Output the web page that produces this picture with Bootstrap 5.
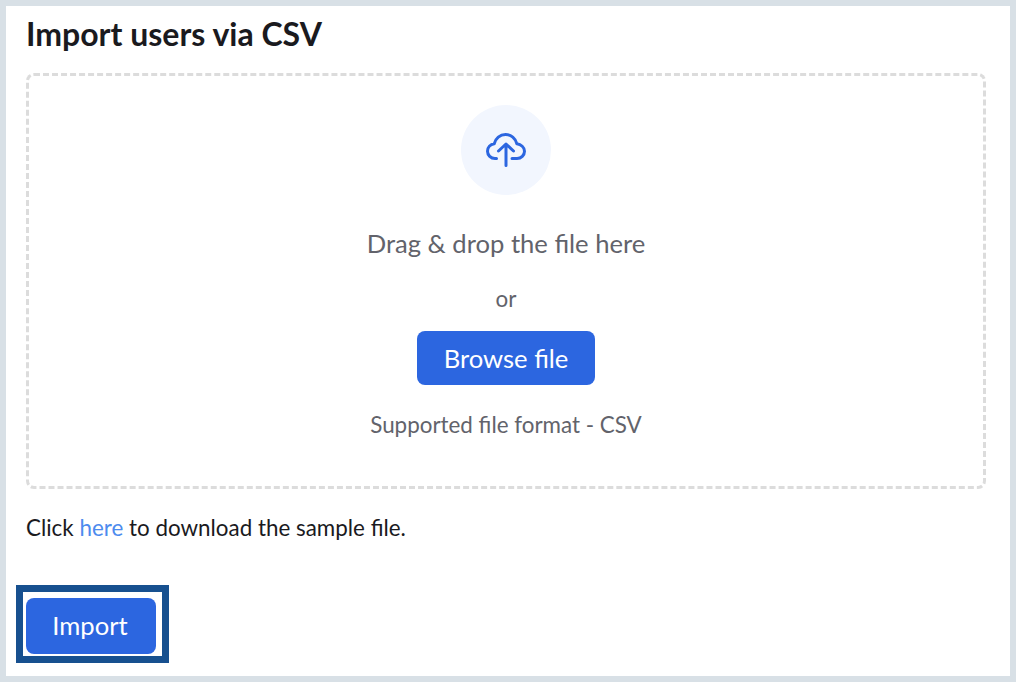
<!DOCTYPE html>
<html lang="en">
<head>
<meta charset="utf-8">
<title>Import users via CSV</title>
<link href="https://cdn.jsdelivr.net/npm/bootstrap@5.3.0/dist/css/bootstrap.min.css" rel="stylesheet">
<style>
html,body{height:100%;}
body{background:#d8e0e6;font-family:Lato,"Liberation Sans",sans-serif;padding:6px;overflow:hidden;}
.sheet{background:#fff;height:670px;padding:0 24px 0 20px;}
.page-title{font-size:32px;font-weight:700;color:#1a1a1e;line-height:38px;margin:0;padding-top:9px;height:67px;}
.drop{height:416px;border:3px dashed #dcdcdc;border-radius:8px;padding-top:29px;}
.halo{width:90px;height:90px;background:#f2f6fe;border-radius:50%;}
.drag-text{font-size:25.6px;line-height:30px;color:#62636b;margin-top:33px;}
.or-text{font-size:22.4px;line-height:26px;color:#62636b;margin-top:28px;}
.browse,.import{background:#2c66e0;border:0;color:#fff;font-size:25.6px;line-height:30px;border-radius:8px;}
.browse{width:178px;height:54px;margin-top:19px;}
.format-text{font-size:22.4px;line-height:28px;color:#62636b;margin-top:26px;}
.note{font-size:22.4px;line-height:28px;color:#1a1a1e;margin-top:25px;}
.note a{color:#4d8bee;text-decoration:none;}
.import-wrap{position:relative;width:130px;margin-top:56px;}
.import{width:130px;height:56px;display:block;padding:0 2px 2px 0;}
.callout{position:absolute;left:-10px;top:-13px;width:153px;height:78px;border:7px solid #17508f;pointer-events:none;}
</style>
</head>
<body>
<div class="sheet">
  <h1 class="page-title">Import users via CSV</h1>
  <div class="drop d-flex flex-column align-items-center text-center">
    <div class="halo d-flex align-items-center justify-content-center">
      <svg width="40" height="34" viewBox="0 0 40 34" fill="none" stroke="#2c66e0" stroke-width="3" stroke-linecap="round" stroke-linejoin="round">
        <path d="M10.500 25.500H9C4.800 25.500 1.500 22.300 1.500 18.300C1.500 14.500 4.300 11.400 8.200 10.800C9.500 5.300 14 1.500 19.500 1.500C25 1.500 29.600 5.300 30.900 10.800C35 11.300 38.500 14.300 38.500 18.300C38.500 22.300 35.200 25.500 31 25.500H26"/>
        <path d="M20 32.500V11M12.500 18L20 11L27.500 18"/>
      </svg>
    </div>
    <div class="drag-text">Drag &amp; drop the file here</div>
    <div class="or-text">or</div>
    <button type="button" class="btn browse">Browse file</button>
    <div class="format-text">Supported file format - CSV</div>
  </div>
  <p class="note mb-0">Click <a href="#">here</a> to download the sample file.</p>
  <div class="import-wrap">
    <button type="button" class="btn import">Import</button>
    <div class="callout"></div>
  </div>
</div>
<script src="https://cdn.jsdelivr.net/npm/bootstrap@5.3.0/dist/js/bootstrap.bundle.min.js"></script>
</body>
</html>
